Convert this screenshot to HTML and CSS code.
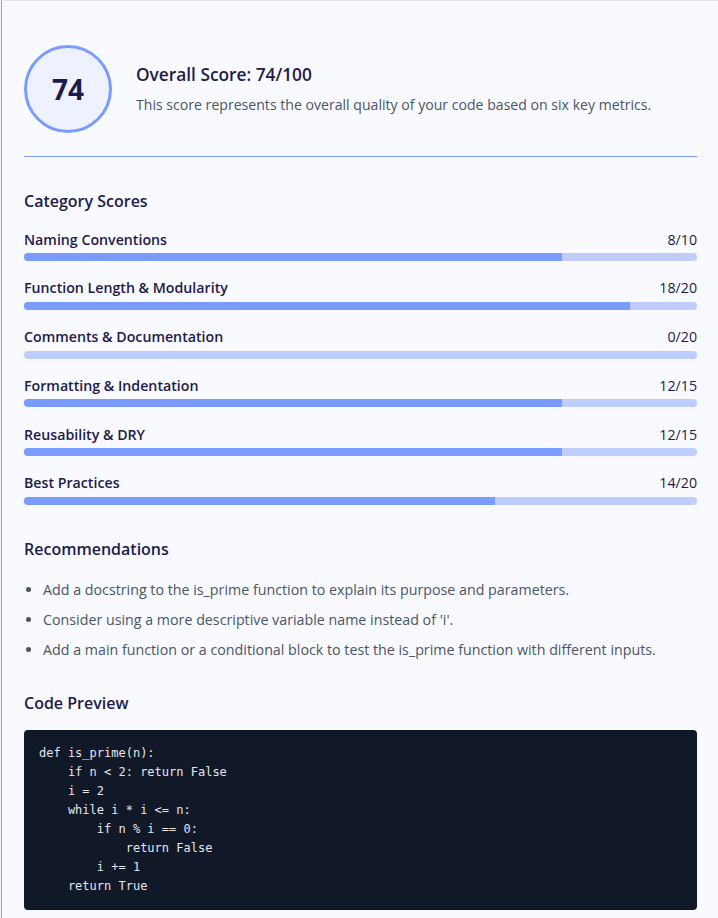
FILE: index.html
```html
<!DOCTYPE html>
<html lang="en">
<head>
<meta charset="utf-8">
<title>Code Quality Report</title>
<link rel="stylesheet" href="styles.css">
</head>
<body>
<main class="report">
  <section class="overview">
    <div class="score-circle"><span class="score-number">74</span></div>
    <div class="overview-text">
      <h1 class="overview-title">Overall Score: 74/100</h1>
      <p class="overview-desc">This score represents the overall quality of your code based on six key metrics.</p>
    </div>
  </section>

  <section class="section categories">
    <h2 class="section-title">Category Scores</h2>
    <div class="cat-list">
      <div class="cat">
        <div class="cat-head"><span class="cat-name">Naming Conventions</span><span class="cat-score">8/10</span></div>
        <div class="bar"><div class="bar-fill" style="width: 80%"></div></div>
      </div>
      <div class="cat">
        <div class="cat-head"><span class="cat-name">Function Length &amp; Modularity</span><span class="cat-score">18/20</span></div>
        <div class="bar"><div class="bar-fill" style="width: 90%"></div></div>
      </div>
      <div class="cat">
        <div class="cat-head"><span class="cat-name">Comments &amp; Documentation</span><span class="cat-score">0/20</span></div>
        <div class="bar"><div class="bar-fill" style="width: 0%"></div></div>
      </div>
      <div class="cat">
        <div class="cat-head"><span class="cat-name">Formatting &amp; Indentation</span><span class="cat-score">12/15</span></div>
        <div class="bar"><div class="bar-fill" style="width: 80%"></div></div>
      </div>
      <div class="cat">
        <div class="cat-head"><span class="cat-name">Reusability &amp; DRY</span><span class="cat-score">12/15</span></div>
        <div class="bar"><div class="bar-fill" style="width: 80%"></div></div>
      </div>
      <div class="cat">
        <div class="cat-head"><span class="cat-name">Best Practices</span><span class="cat-score">14/20</span></div>
        <div class="bar"><div class="bar-fill" style="width: 70%"></div></div>
      </div>
    </div>
  </section>

  <section class="section recommendations">
    <h2 class="section-title">Recommendations</h2>
    <ul class="rec-list">
      <li>Add a docstring to the is_prime function to explain its purpose and parameters.</li>
      <li>Consider using a more descriptive variable name instead of 'i'.</li>
      <li>Add a main function or a conditional block to test the is_prime function with different inputs.</li>
    </ul>
  </section>

  <section class="section preview">
    <h2 class="section-title">Code Preview</h2>
<pre class="code">def is_prime(n):
    if n &lt; 2: return False
    i = 2
    while i * i &lt;= n:
        if n % i == 0:
            return False
        i += 1
    return True</pre>
  </section>
</main>
</body>
</html>
```

FILE: styles.css
```css
* { box-sizing: border-box; }

html, body {
  margin: 0;
  padding: 0;
  background: #f8faff;
}

body {
  font-family: "Open Sans", "Noto Sans", sans-serif;
  color: #1e1b4b;
}

.report {
  margin-left: 1px;
  border-left: 1px solid #7b9cff;
  border-top: 1px solid #e5e7eb;
  padding: 44px 21px 20px 22px;
  min-height: 918px;
}

.overview {
  display: flex;
  align-items: center;
  gap: 24px;
  padding-bottom: 23px;
  border-bottom: 1px solid #7b9cff;
}

.score-circle {
  width: 88px;
  height: 88px;
  flex: 0 0 88px;
  border-radius: 50%;
  border: 3px solid #7b9cff;
  background: #eef2ff;
  display: flex;
  align-items: center;
  justify-content: center;
}

.score-number {
  font-size: 28px;
  font-weight: 700;
  color: #1e1b4b;
}

.overview-title {
  margin: 0 0 8px;
  font-size: 17.3px;
  line-height: 24px;
  font-weight: 600;
  color: #1e1b4b;
}

.overview-desc {
  margin: 0;
  font-size: 14.1px;
  line-height: 20px;
  color: #4b5563;
}

.section { margin-top: 32px; }
.preview { margin-top: 30px; }

.section-title {
  margin: 0;
  font-size: 16px;
  line-height: 24px;
  font-weight: 600;
  color: #1e1b4b;
}

.cat-list {
  display: flex;
  flex-direction: column;
  gap: 16.8px;
  margin-top: 16px;
}

.cat-head {
  display: flex;
  justify-content: space-between;
  align-items: center;
  height: 20px;
  margin-bottom: 4px;
}

.cat-name {
  font-size: 14.2px;
  font-weight: 600;
  color: #1e1b4b;
}

.cat-score {
  font-size: 14.2px;
  color: #1e1b4b;
}

.bar {
  height: 8px;
  border-radius: 4px;
  background: #bfcdfd;
  overflow: hidden;
}

.bar-fill {
  height: 100%;
  background: #7b9cff;
}

.rec-list {
  margin: 18px 0 0;
  padding-left: 19px;
  font-size: 14.25px;
  line-height: 22px;
  color: #4b5563;
}

.rec-list li { margin-bottom: 8px; }
.rec-list li:last-child { margin-bottom: 0; }

.code {
  margin: 15px 0 0;
  padding: 14px 15px;
  background: #111827;
  border-radius: 4px;
  color: #e5e7eb;
  font-family: "DejaVu Sans Mono", "Liberation Mono", monospace;
  font-size: 12px;
  line-height: 19px;
}
```
